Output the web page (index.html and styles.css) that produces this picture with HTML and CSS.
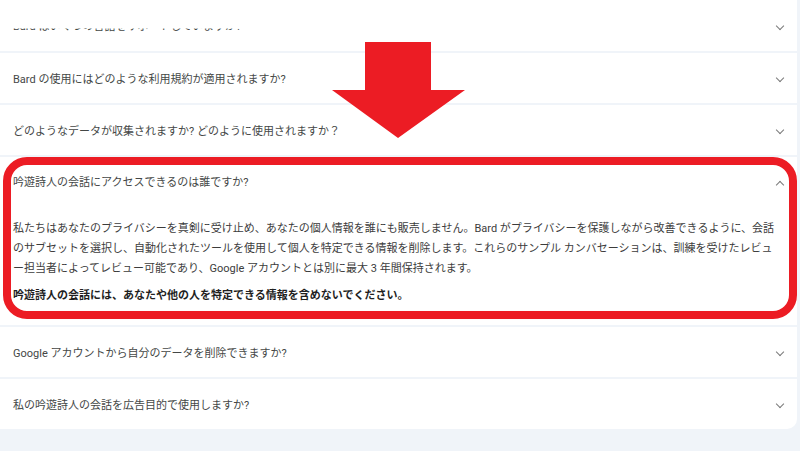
FILE: index.html
```html
<!DOCTYPE html>
<html lang="ja">
<head>
<meta charset="utf-8">
<title>FAQ</title>
<link rel="stylesheet" href="styles.css">
</head>
<body>
<div class="page">
  <div class="faq">
    <div class="item first">
      <span class="q cut">Bard はいくつの言語をサポートしていますか?</span>
      <span class="chev down"></span>
    </div>
    <div class="item">
      <span class="q">Bard の使用にはどのような利用規約が適用されますか?</span>
      <span class="chev down"></span>
    </div>
    <div class="item">
      <span class="q">どのようなデータが収集されますか? どのように使用されますか？</span>
      <span class="chev down"></span>
    </div>
    <div class="item open">
      <div class="head">
        <span class="q">吟遊詩人の会話にアクセスできるのは誰ですか?</span>
        <span class="chev up"></span>
      </div>
      <div class="answer">
        <p class="body">
          <span class="line">私たちはあなたのプライバシーを真剣に受け止め、あなたの個人情報を誰にも販売しません。Bard がプライバシーを保護しながら改善できるように、会話</span>
          <span class="line">のサブセットを選択し、自動化されたツールを使用して個人を特定できる情報を削除します。これらのサンプル カンバセーションは、訓練を受けたレビュ</span>
          <span class="line">ー担当者によってレビュー可能であり、Google アカウントとは別に最大 3 年間保持されます。</span>
        </p>
        <p class="strong">吟遊詩人の会話には、あなたや他の人を特定できる情報を含めないでください。</p>
      </div>
    </div>
    <div class="item">
      <span class="q">Google アカウントから自分のデータを削除できますか?</span>
      <span class="chev down"></span>
    </div>
    <div class="item last">
      <span class="q">私の吟遊詩人の会話を広告目的で使用しますか?</span>
      <span class="chev down"></span>
    </div>
  </div>
  <div class="highlight"></div>
  <svg class="arrow" width="133" height="96" viewBox="0 0 133 96" aria-hidden="true">
    <polygon points="33,0 99,0 99,48 133,48 66,96 0,48 33,48" fill="#ec1c24"/>
  </svg>
</div>
</body>
</html>
```
FILE: styles.css
```css
html, body {
  margin: 0;
  padding: 0;
}
body {
  background: #f0f4f9;
  font-family: Roboto, "Noto Sans CJK JP", sans-serif;
  font-size: 11px;
  color: #444746;
}
.page {
  position: relative;
  width: 800px;
  height: 451px;
  overflow: hidden;
}
.faq {
  width: 797px;
  display: flex;
  flex-direction: column;
  gap: 2px;
}
.item {
  background: #fff;
  height: 50px;
  display: flex;
  align-items: center;
  justify-content: space-between;
  padding: 3px 12px 0 13px;
  box-sizing: border-box;
}
.item.first {
  height: 51px;
}
.item.last {
  border-bottom-right-radius: 10px;
}
.item.open {
  height: 168px;
  display: block;
  padding: 16px 12px 0 13px;
}
.head {
  display: flex;
  align-items: center;
  justify-content: space-between;
  height: 20px;
}
.q {
  line-height: 20px;
  white-space: nowrap;
}
.cut {
  clip-path: inset(58% 0 0 0);
}
.chev {
  width: 5px;
  height: 5px;
  border-right: 1.3px solid #7a7a7a;
  border-bottom: 1.3px solid #7a7a7a;
  margin-right: 2px;
}
.chev.down {
  transform: rotate(45deg);
  margin-top: -3px;
}
.chev.up {
  transform: rotate(-135deg);
  margin-top: 3px;
}
.answer {
  margin-top: 26px;
}
.body {
  margin: 0;
  color: #3c3c3c;
  line-height: 20px;
}
.line {
  display: block;
  white-space: nowrap;
}
.strong {
  margin: 7px 0 0;
  line-height: 20px;
  font-weight: bold;
  color: #1f1f1f;
  white-space: nowrap;
}
.highlight {
  position: absolute;
  left: 3px;
  top: 157px;
  width: 794px;
  height: 162px;
  box-sizing: border-box;
  border: 8px solid #ec1c24;
  border-radius: 24px;
}
.arrow {
  position: absolute;
  left: 332px;
  top: 42px;
}
```
